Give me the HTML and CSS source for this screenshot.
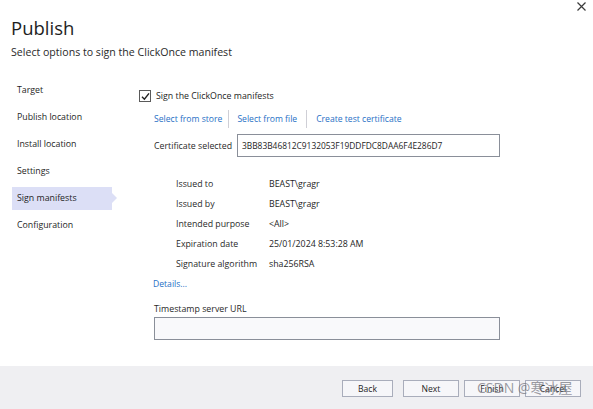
FILE: index.html
```html
<!DOCTYPE html>
<html>
<head>
<meta charset="utf-8">
<link rel="stylesheet" href="styles.css">
</head>
<body>
<div class="dialog">
  <button class="close" aria-label="Close">
    <svg width="9" height="9" viewBox="0 0 9 9"><path d="M0.5 0.5 L8.5 8.5 M8.5 0.5 L0.5 8.5" stroke="#3a3a3a" stroke-width="1.2" fill="none"/></svg>
  </button>
  <header class="head">
    <h1 class="title">Publish</h1>
    <p class="subtitle">Select options to sign the ClickOnce manifest</p>
  </header>
  <div class="main">
    <nav class="nav">
      <div class="nav-item">Target</div>
      <div class="nav-item">Publish location</div>
      <div class="nav-item">Install location</div>
      <div class="nav-item">Settings</div>
      <div class="nav-item selected">Sign manifests</div>
      <div class="nav-item">Configuration</div>
    </nav>
    <section class="content">
      <label class="check-row">
        <span class="checkbox">
          <svg width="9" height="9" viewBox="0 0 9 9"><path d="M1 4.8 L3.4 7.2 L8 1.4" stroke="#222" stroke-width="1.4" fill="none"/></svg>
        </span>
        Sign the ClickOnce manifests
      </label>
      <div class="links">
        <a class="link">Select from store</a>
        <span class="sep sep-a"></span>
        <a class="link">Select from file</a>
        <span class="sep sep-b"></span>
        <a class="link">Create test certificate</a>
      </div>
      <div class="cert-row">
        <span class="cert-label">Certificate selected</span>
        <div class="textbox cert-box">3BB83B46812C9132053F19DDFDC8DAA6F4E286D7</div>
      </div>
      <div class="details">
        <div class="d-row"><span class="d-key">Issued to</span><span class="d-val">BEAST\gragr</span></div>
        <div class="d-row"><span class="d-key">Issued by</span><span class="d-val">BEAST\gragr</span></div>
        <div class="d-row"><span class="d-key">Intended purpose</span><span class="d-val">&lt;All&gt;</span></div>
        <div class="d-row"><span class="d-key">Expiration date</span><span class="d-val">25/01/2024 8:53:28 AM</span></div>
        <div class="d-row"><span class="d-key">Signature algorithm</span><span class="d-val">sha256RSA</span></div>
      </div>
      <a class="link details-link">Details...</a>
      <div class="ts-label">Timestamp server URL</div>
      <div class="textbox ts-box"></div>
    </section>
  </div>
  <footer class="footer">
    <button class="btn btn-back">Back</button>
    <button class="btn btn-next">Next</button>
    <button class="btn">Finish</button>
    <button class="btn">Cancel</button>
    <span class="watermark">CSDN @寒冰屋</span>
  </footer>
</div>
</body>
</html>
```
FILE: styles.css
```css
* { box-sizing: border-box; }
html, body { margin: 0; padding: 0; background: #ffffff; }
body {
  font-family: "Open Sans", "Noto Sans", "Noto Sans CJK SC", sans-serif;
  color: #1e1e1e;
  font-size: 9px;
}
.dialog {
  position: relative;
  width: 593px;
  height: 409px;
  display: flex;
  flex-direction: column;
  overflow: hidden;
}
.close {
  position: absolute;
  top: 1px;
  right: 6px;
  width: 11px;
  height: 11px;
  padding: 1px;
  border: 0;
  background: transparent;
  display: flex;
  align-items: center;
  justify-content: center;
}
.head { padding: 16px 0 0 11px; }
.title {
  margin: 0;
  font-weight: 400;
  font-size: 18.5px;
  line-height: 24px;
  color: #1e1e1e;
}
.subtitle {
  margin: 5px 0 0 0;
  font-size: 10.6px;
  line-height: 15px;
  color: #2a2a2a;
}
.main {
  flex: 1;
  display: flex;
  padding-top: 19px;
}
.nav {
  width: 139px;
  padding-left: 12px;
  display: flex;
  flex-direction: column;
  gap: 4px;
}
.nav-item {
  position: relative;
  width: 100px;
  height: 23px;
  line-height: 23px;
  padding-left: 5px;
  color: #1e1e1e;
  font-size: 8.8px;
}
.nav-item.selected { background: #dcdff6; }
.nav-item.selected::after {
  content: "";
  position: absolute;
  right: -5px;
  top: 6px;
  border-top: 5.5px solid transparent;
  border-bottom: 5.5px solid transparent;
  border-left: 5px solid #dcdff6;
}
.content {
  flex: 1;
  display: flex;
  flex-direction: column;
  align-items: flex-start;
  padding-top: 10px;
}
.check-row {
  display: flex;
  align-items: center;
  height: 14px;
  gap: 5px;
  font-size: 8.8px;
  color: #1e1e1e;
}
.checkbox {
  width: 12px;
  height: 12px;
  border: 1px solid #5a5a5a;
  background: #fff;
  display: flex;
  align-items: center;
  justify-content: center;
}
.links {
  display: flex;
  align-items: center;
  height: 20px;
  margin-top: 6px;
  margin-left: 15px;
}
.link {
  color: #1f6fc5;
  font-size: 8.6px;
  cursor: pointer;
}
.sep {
  width: 1px;
  height: 18px;
  background: #cfcfd6;
}
.sep-a { margin: 0 8px 0 6px; }
.sep-b { margin: 0 9px 0 9px; }
.cert-row {
  display: flex;
  align-items: center;
  margin-top: 5px;
  margin-left: 15px;
}
.cert-label {
  width: 83px;
  font-size: 8.8px;
  color: #2a2a2a;
}
.textbox {
  border: 1px solid #8a8f99;
  background: #ffffff;
}
.cert-box {
  width: 263px;
  height: 23px;
  line-height: 21px;
  padding-left: 4px;
  font-size: 8.4px;
  color: #1e1e1e;
}
.details {
  margin-top: 17px;
  margin-left: 37px;
  display: flex;
  flex-direction: column;
}
.d-row {
  display: flex;
  height: 20px;
  line-height: 20px;
  font-size: 8.8px;
}
.d-key { width: 93px; color: #2a2a2a; }
.d-val { color: #1e1e1e; }
.details-link {
  margin-top: 0px;
  margin-left: 14px;
  line-height: 20px;
}
.ts-label {
  margin-top: 9px;
  margin-left: 15px;
  font-size: 8.8px;
  line-height: 12px;
  color: #2a2a2a;
}
.ts-box {
  margin-top: 2px;
  margin-left: 15px;
  width: 346px;
  height: 23px;
  background: #f9f9fb;
}
.footer {
  position: relative;
  height: 43px;
  background: #efeff2;
  display: flex;
  align-items: flex-start;
  justify-content: flex-end;
  padding: 14px 12px 0 0;
  gap: 5px;
}
.btn {
  width: 56px;
  height: 17px;
  padding: 0;
  border: 1px solid #a9adbb;
  background: #f6f6f9;
  font-family: inherit;
  font-size: 8.6px;
  color: #1e1e1e;
}
.btn-back { width: 51px; margin-right: 5px; }
.watermark {
  position: absolute;
  left: 477px;
  top: 14px;
  font-size: 14px;
  line-height: 16px;
  color: rgba(110, 110, 120, 0.7);
  pointer-events: none;
  white-space: nowrap;
}
```
